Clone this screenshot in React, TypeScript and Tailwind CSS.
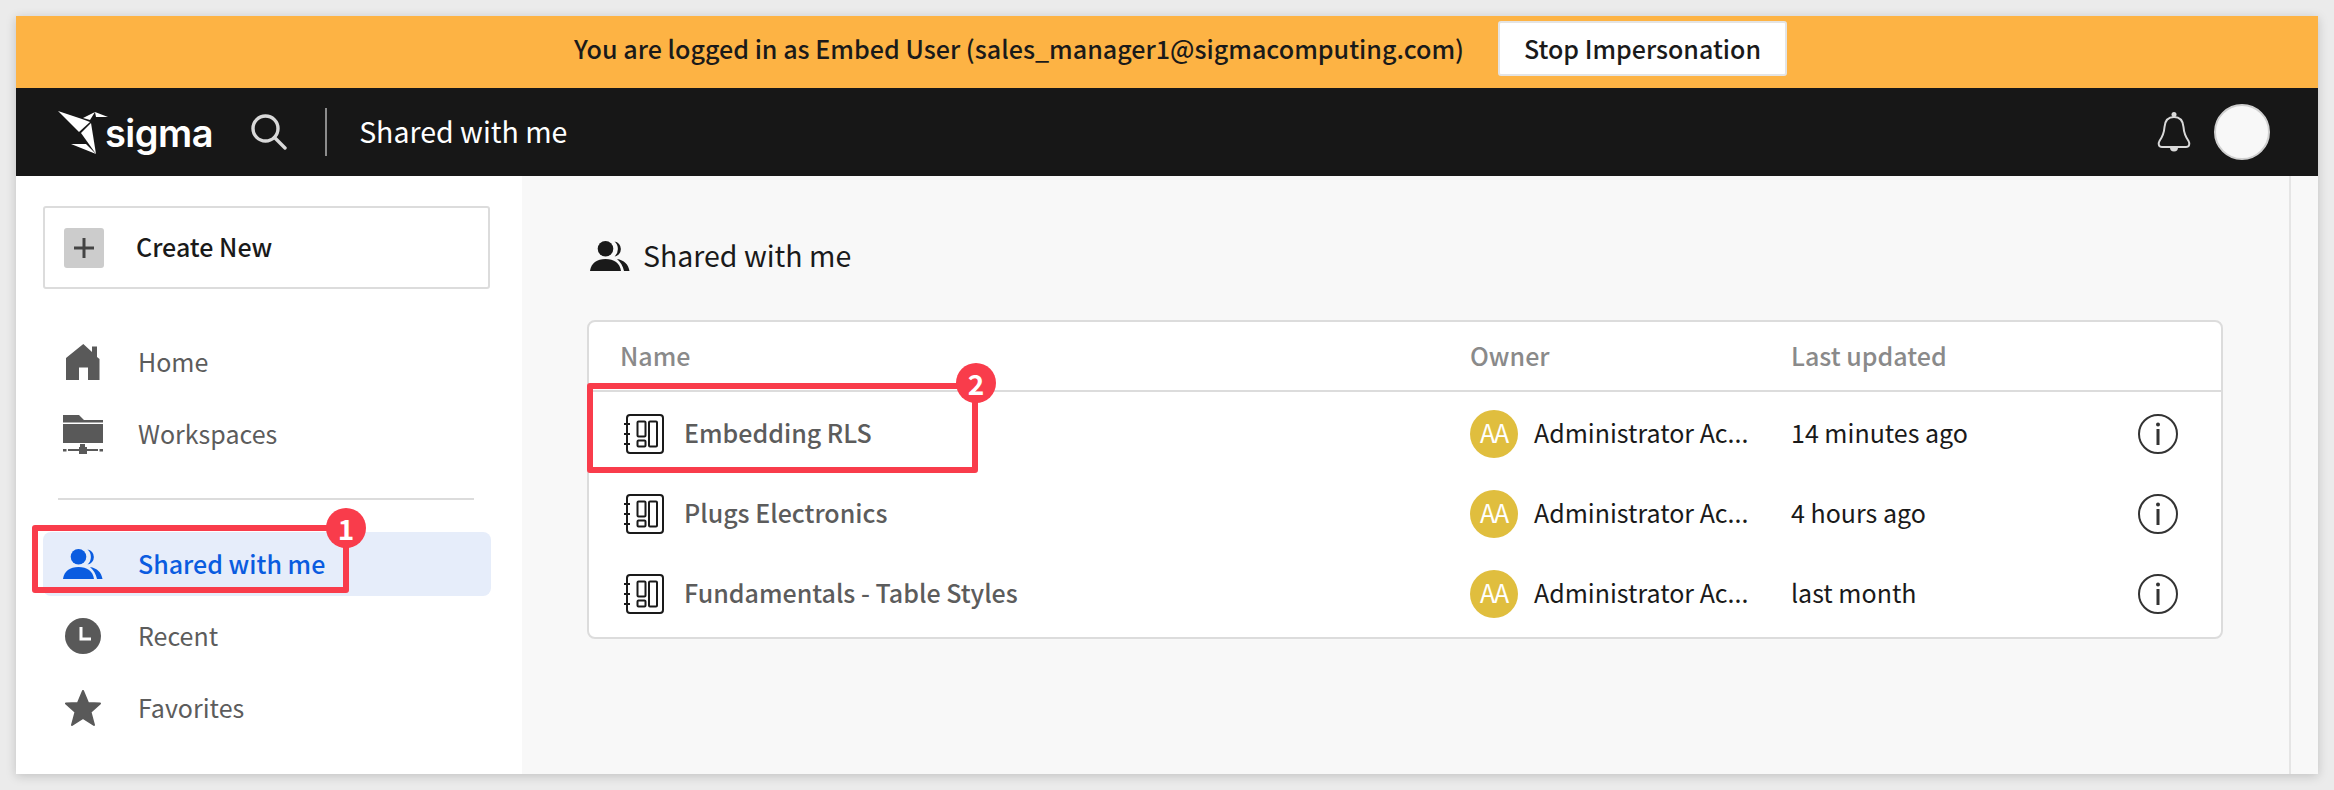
import type { ReactNode } from 'react';

const FONT = '[font-family:"Noto_Sans_CJK_JP","Noto_Sans",sans-serif]';

const SigmaMark = () => (
  <svg width="50" height="43" viewBox="0 0 50 43" fill="#fff">
    <polygon points="0,0 24,8 32,11 21,21" />
    <polygon points="25,7 37,1 32,9" />
    <polygon points="37,1 50,6 38,6" />
    <polygon points="33,12 38,43 23,22" />
    <polygon points="13,33 28,33 38,43" />
  </svg>
);

const SearchIcon = () => (
  <svg width="36" height="36" viewBox="0 0 36 36" fill="none" stroke="#d9d9d9" strokeWidth="3.4" strokeLinecap="round">
    <circle cx="14.5" cy="14.5" r="12.5" />
    <line x1="23.5" y1="23.5" x2="34" y2="34" />
  </svg>
);

const BellIcon = () => (
  <svg width="34" height="40" viewBox="0 0 34 40" fill="none">
    <circle cx="17" cy="2.5" r="2.5" fill="#d9d9d9" />
    <circle cx="17" cy="35.5" r="4" fill="#d9d9d9" />
    <path
      d="M17 5c-6 0-9 4-9.500 10-.4 6-1.500 9-5 14-1.500 2.500-1 6 2.500 6h24c3.500 0 4-3.500 2.500-6-3.500-5-4.600-8-5-14C26 9 23 5 17 5Z"
      fill="#171717"
      stroke="#d9d9d9"
      strokeWidth="2"
    />
  </svg>
);

const PeopleIcon = ({ color }: { color: string }) => (
  <svg width="40" height="30" viewBox="0 0 40 30" fill={color}>
    <circle cx="15.500" cy="7.800" r="7.800" />
    <path d="M0 30c1-8 7-12 15.500-12S30 22 31 30Z" />
    <path d="M24.500 .5A7.600 7.600 0 0 1 24.500 15.500 10 10 0 0 0 24.500 .5Z" />
    <path d="M27 18c7 1 11.500 5.500 12.500 12H34c-1-5-3.500-9-7-12Z" />
  </svg>
);

const HomeIcon = () => (
  <svg width="34" height="36" viewBox="0 0 34 36" fill="#595959">
    <path d="M17.300 0 26 8V2.500h5V13l2.500 2v21H22V23.500h-9V36H0V14Z" />
  </svg>
);

const FolderIcon = () => (
  <svg width="40" height="39" viewBox="0 0 40 39" fill="#595959">
    <path d="M0 0h16l5 5h19v2.500H0Z" />
    <rect y="9" width="40" height="19" />
    <rect x="17" y="29" width="5" height="4" />
    <rect x="16" y="32" width="8" height="7" />
    <rect x="5" y="34" width="30" height="2" />
    <rect y="34" width="3.500" height="2.500" />
    <rect x="36.500" y="34" width="3.500" height="2.500" />
  </svg>
);

const ClockIcon = () => (
  <svg width="36" height="36" viewBox="0 0 36 36">
    <circle cx="18" cy="18" r="18" fill="#595959" />
    <path d="M16 9v12h10" fill="none" stroke="#fff" strokeWidth="3" />
  </svg>
);

const StarIcon = () => (
  <svg width="36" height="36" viewBox="0 0 36 36" fill="#595959" stroke="#595959" strokeWidth="2" strokeLinejoin="round">
    <polygon points="18,1 23,13 35,13.500 25.500,22 29,35 18,28 7,35 10.500,22 1,13.500 13,13" />
  </svg>
);

const NotebookIcon = () => (
  <svg width="40" height="40" viewBox="0 0 40 40" fill="none" stroke="#1a1a1a" strokeWidth="2">
    <rect x="3" y="1" width="36" height="38" rx="3" />
    <rect x="13.500" y="7.500" width="8" height="15" rx="1" />
    <rect x="13.500" y="26.500" width="8" height="6" rx="1" />
    <rect x="25" y="7.500" width="8" height="25" rx="1" />
    <path d="M0 10h6M0 20h6M0 30h6" />
  </svg>
);

const InfoIcon = () => (
  <svg width="40" height="40" viewBox="0 0 40 40" fill="none">
    <circle cx="20" cy="20" r="19" stroke="#333" strokeWidth="2" />
    <circle cx="20" cy="10.500" r="2" fill="#333" />
    <rect x="18.500" y="15" width="3" height="16" fill="#333" />
  </svg>
);

// Red call-out number sitting on the corner of an annotation box
const Badge = ({ n, className }: { n: number; className: string }) => (
  <div
    className={`absolute flex h-10 w-10 items-center justify-center rounded-full bg-[#f93c4b] text-[28px] leading-none font-bold text-white ${className}`}
  >
    {n}
  </div>
);

const NavItem = ({ icon, label }: { icon: ReactNode; label: string }) => (
  <div className="flex h-[72px] items-center">
    <div className="flex w-[95px] justify-center pr-[15px]">{icon}</div>
    <span className="mt-[-2px] text-[25px] leading-none text-[#5c5c5c]">{label}</span>
  </div>
);

const rows = [
  { name: 'Embedding RLS', updated: '14 minutes ago' },
  { name: 'Plugs Electronics', updated: '4 hours ago' },
  { name: 'Fundamentals - Table Styles', updated: 'last month' },
];

export default function App() {
  return (
    <div className={`h-[790px] w-[2334px] overflow-hidden bg-[#ebebeb] pt-4 pl-4 ${FONT}`}>
      <div className="flex h-[758px] w-[2302px] flex-col shadow-[0_2px_10px_rgba(0,0,0,0.18)]">
        {/* impersonation banner */}
        <div className="flex h-[72px] shrink-0 items-center justify-center bg-[#fdb344] pb-[7px] pl-[27px]">
          <span className="mr-[34px] text-[25.1px] leading-none font-medium text-[#1a1a1a]">
            You are logged in as Embed User (sales_manager1@sigmacomputing.com)
          </span>
          <button className="h-[55px] w-[289px] rounded-[3px] border-2 border-[#e4e4e4] bg-white text-[25px] leading-none font-medium text-[#1a1a1a]">
            Stop Impersonation
          </button>
        </div>

        {/* top bar */}
        <div className="flex h-[88px] shrink-0 items-center bg-[#171717] pl-[42px]">
          <SigmaMark />
          <span className="mt-[2px] ml-[-3px] text-[38px] leading-none font-semibold tracking-[-0.5px] text-white [font-family:Inter,sans-serif]">
            sigma
          </span>
          <div className="ml-[38px]">
            <SearchIcon />
          </div>
          <div className="ml-[38px] h-[48px] w-[2px] bg-[#8c8c8c]" />
          <span className="mt-[-2px] ml-[32px] text-[28.5px] leading-none text-white">Shared with me</span>
          <div className="ml-auto flex items-center gap-[23px] pr-[48px]">
            <BellIcon />
            <div className="h-[56px] w-[56px] rounded-full border-2 border-[#d0d0d0] bg-[#f8f8f8]" />
          </div>
        </div>

        <div className="flex min-h-0 flex-1">
          {/* sidebar */}
          <aside className="w-[506px] shrink-0 bg-white pt-[30px] pl-[27px]">
            <div className="flex h-[83px] w-[447px] items-center rounded-[3px] border-2 border-[#dcdcdc] pl-[19px]">
              <div className="flex h-10 w-10 items-center justify-center rounded-[3px] bg-[#cccccc]">
                <svg width="20" height="20" viewBox="0 0 20 20" fill="#444">
                  <rect x="8.500" width="3" height="20" />
                  <rect y="8.500" width="20" height="3" />
                </svg>
              </div>
              <span className="mt-[-2px] ml-[32px] text-[25px] leading-none font-medium text-[#1a1a1a]">Create New</span>
            </div>

            <nav className="mt-[37px]">
              <NavItem icon={<HomeIcon />} label="Home" />
              <NavItem icon={<FolderIcon />} label="Workspaces" />
            </nav>

            <div className="mt-[28px] ml-[15px] h-[2px] w-[416px] bg-[#dcdcdc]" />

            <div className="relative mt-[32px] flex h-[64px] w-[448px] items-center rounded-[8px] bg-[#e6edfa]">
              <div className="flex w-[95px] justify-center pr-[15px]">
                <PeopleIcon color="#0a5ce0" />
              </div>
              <span className="mt-[-2px] text-[25px] leading-none font-medium text-[#0a5ce0]">Shared with me</span>
              <div className="absolute top-[-7px] left-[-11px] h-[68px] w-[317px] rounded-[3px] border-[6px] border-[#f93c4b]" />
              <Badge n={1} className="top-[-24px] left-[283px]" />
            </div>

            <div className="mt-[4px]">
              <NavItem icon={<ClockIcon />} label="Recent" />
              <NavItem icon={<StarIcon />} label="Favorites" />
            </div>
          </aside>

          {/* main content */}
          <main className="flex flex-1 bg-[#f8f8f8]">
            <div className="w-[1767px] pt-[65px] pl-[65px]">
              <div className="ml-[3px] flex h-[30px] items-center">
                <PeopleIcon color="#1a1a1a" />
                <span className="mt-[-2px] ml-[13px] text-[28.5px] leading-none text-[#1a1a1a]">Shared with me</span>
              </div>

              <div className="mt-[49px] h-[319px] w-[1636px] rounded-[8px] border-2 border-[#dcdcdc] bg-white">
                <div className="flex h-[70px] items-center border-b-2 border-[#dcdcdc] pb-[2px] text-[25px] leading-none font-medium text-[#8a8a8a]">
                  <span className="ml-[31px] w-[850px]">Name</span>
                  <span className="w-[321px]">Owner</span>
                  <span>Last updated</span>
                </div>
                {rows.map((row, i) => (
                  <div key={row.name} className="relative flex h-[80px] items-center pt-[3px]">
                    <div className="ml-[35px] flex w-[846px] items-center">
                      <NotebookIcon />
                      <span className="mt-[-3px] ml-[20px] text-[25px] leading-none font-medium text-[#5c5c5c]">{row.name}</span>
                    </div>
                    <div className="flex w-[321px] items-center">
                      <div className="flex h-12 w-12 shrink-0 items-center justify-center rounded-full bg-[#e0be3e] pb-[2px] text-[25px] leading-none tracking-[-1px] text-white">
                        AA
                      </div>
                      <span className="mt-[-3px] ml-[16px] w-[224px] text-[25px] leading-none whitespace-nowrap text-[#1a1a1a]">
                        Administrator Ac...
                      </span>
                    </div>
                    <span className="mt-[-3px] w-[347px] text-[25px] leading-none text-[#1a1a1a]">{row.updated}</span>
                    <InfoIcon />
                    {i === 0 && (
                      <>
                        <div className="absolute top-[-9px] left-[-2px] h-[90px] w-[391px] rounded-[3px] border-[6px] border-[#f93c4b]" />
                        <Badge n={2} className="top-[-29px] left-[367px]" />
                      </>
                    )}
                  </div>
                ))}
              </div>
            </div>
            <div className="flex-1 border-l-2 border-[#e5e5e5]" />
          </main>
        </div>
      </div>
    </div>
  );
}
